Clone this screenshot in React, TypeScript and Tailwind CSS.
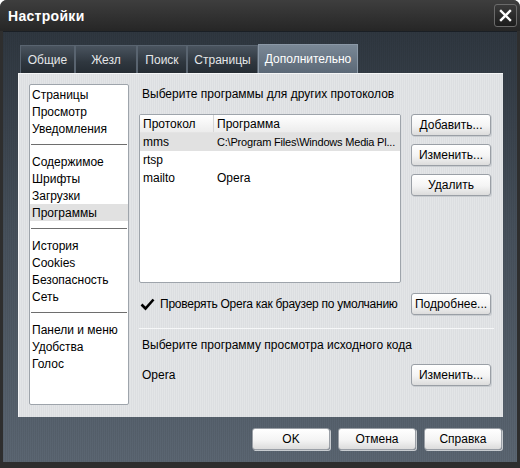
import React from 'react'

const FONT = { fontFamily: '"Liberation Sans", "DejaVu Sans", sans-serif' }

const TABS = ['Общие', 'Жезл', 'Поиск', 'Страницы', 'Дополнительно']
const TAB_W = [55, 62, 50, 71, 100]

const GROUPS: string[][] = [
  ['Страницы', 'Просмотр', 'Уведомления'],
  ['Содержимое', 'Шрифты', 'Загрузки', 'Программы'],
  ['История', 'Cookies', 'Безопасность', 'Сеть'],
  ['Панели и меню', 'Удобства', 'Голос'],
]

const ROWS = [
  { proto: 'mms', prog: 'C:\\Program Files\\Windows Media Pl...', sel: true },
  { proto: 'rtsp', prog: '', sel: false },
  { proto: 'mailto', prog: 'Opera', sel: false },
]

function Btn({ children, w = 'w-[80px]' }: { children: React.ReactNode; w?: string }) {
  return (
    <button
      className={`${w} h-[22px] rounded-[3px] border border-[#9a9fa6] bg-[linear-gradient(#ffffff,#f4f4f4_55%,#dcdcdc)] text-[12px] text-black shadow-[1px_1px_0_#c8ccd0] flex items-center justify-center shrink-0`}
    >
      {children}
    </button>
  )
}

export default function App() {
  return (
    <div style={FONT} className="w-[520px] h-[468px] flex flex-col bg-[#2e2e2e] rounded-t-[7px] px-[3px] pb-[6px]">
      <div className="h-[31px] flex items-center justify-between bg-[linear-gradient(#3e3e3e,#262626)] rounded-t-[7px] -mx-[3px] pl-[8px] pr-[3px]">
        <span className="text-white font-bold text-[14px] tracking-[0.3px] mt-[2px]">Настройки</span>
        <div className="w-[23px] h-[23px] rounded-[3px] border border-[#6a6a6a] bg-[linear-gradient(#3a3a3a,#1c1c1c)] flex items-center justify-center">
          <svg width="13" height="13" viewBox="0 0 13 13">
            <path d="M2 2 L11 11 M11 2 L2 11" stroke="#fff" strokeWidth="2.4" strokeLinecap="square" />
          </svg>
        </div>
      </div>

      <div className="flex-1 flex flex-col pt-[13px] pl-[15px] pr-[14px] border-t border-[#1a1f25] bg-[image:repeating-linear-gradient(90deg,rgba(0,0,0,0.06)_0px,rgba(0,0,0,0.06)_1px,transparent_1px,transparent_2px),linear-gradient(#2f3740,#46505b_45%,#5b6672)]">
        <div className="flex items-end ml-[2px] h-[28px]">
          {TABS.map((t, i) => {
            const active = i === TABS.length - 1
            return (
              <div
                key={t}
                style={{ width: TAB_W[i] }}
                className={`flex items-center justify-center text-[12px] border border-b-0 ${
                  active
                    ? 'h-[29px] text-white border-[#8b98a6] bg-[linear-gradient(#7a8896,#5b6876)]'
                    : 'h-[28px] text-[#e4e6e8] border-[#596470] bg-[linear-gradient(#4a545f,#2f373f_60%,#252c33)]'
                }`}
              >
                {t}
              </div>
            )
          })}
        </div>

        <div className="h-[344px] flex pl-[10px] pt-[10px] border-l border-t border-[#f4f5f6] bg-[repeating-linear-gradient(90deg,#dcdee1_0px,#dcdee1_1px,#e3e5e7_1px,#e3e5e7_2px)]">
          <div className="w-[100px] h-[321px] bg-white border border-[#9ea4ab] rounded-[2px] flex flex-col pt-[1px] text-[12px] text-black shrink-0">
            {GROUPS.map((g, gi) => (
              <div key={gi} className="flex flex-col">
                {gi > 0 && <div className="h-[1px] bg-[#6e6e6e] mx-[1px] mt-[7px] mb-[8px]" />}
                {g.map(item => (
                  <div
                    key={item}
                    className={`h-[17px] flex items-center pl-[2px] ${item === 'Программы' ? 'bg-[#e1e1e1]' : ''}`}
                  >
                    {item}
                  </div>
                ))}
              </div>
            ))}
          </div>

          <div className="ml-[10px] flex flex-col text-[12px] text-black w-[352px]">
            <div className="h-[20px] flex items-center pl-[3px]">Выберите программы для других протоколов</div>
            <div className="flex mt-[10px]">
              <div className="w-[262px] h-[169px] bg-white border border-[#9ea4ab] rounded-[2px] flex flex-col shrink-0 overflow-hidden">
                <div className="h-[18px] flex items-center bg-[linear-gradient(#ffffff,#ececec)] border-b border-[#e4e4e4]">
                  <div className="w-[74px] shrink-0 pl-[3px] border-r border-[#d6d6d6] h-full flex items-center">Протокол</div>
                  <div className="pl-[3px]">Программа</div>
                </div>
                {ROWS.map(r => (
                  <div key={r.proto} className={`h-[18px] flex items-center overflow-hidden ${r.sel ? 'bg-[#e1e1e1]' : ''}`}>
                    <div className="w-[74px] shrink-0 pl-[3px]">{r.proto}</div>
                    <div className={`pl-[3px] whitespace-nowrap ${r.prog.length > 20 ? 'text-[11px] tracking-[-0.2px]' : ''}`}>{r.prog}</div>
                  </div>
                ))}
              </div>
              <div className="ml-[10px] flex flex-col gap-[8px]">
                <Btn>Добавить...</Btn>
                <Btn>Изменить...</Btn>
                <Btn>Удалить</Btn>
              </div>
            </div>

            <div className="flex items-center mt-[10px] h-[22px]">
              <div className="w-[262px] shrink-0 flex items-center pl-[1px]">
                <svg width="15" height="15" viewBox="0 0 15 15" className="shrink-0">
                  <path d="M1.5 7.5 L5.5 11.5 L13.5 2.5" stroke="#000" strokeWidth="2.6" fill="none" />
                </svg>
                <span className="ml-[5px] whitespace-nowrap tracking-[-0.25px]">Проверять Opera как браузер по умолчанию</span>
              </div>
              <div className="ml-[10px]">
                <Btn>Подробнее...</Btn>
              </div>
            </div>

            <div className="h-[1px] bg-[#f6f7f8] mt-[13px] w-[355px]" />

            <div className="h-[20px] flex items-center pl-[3px] mt-[6px]">Выберите программу просмотра исходного кода</div>
            <div className="flex items-center mt-[9px] h-[22px]">
              <div className="w-[262px] shrink-0 pl-[3px]">Opera</div>
              <div className="ml-[10px]">
                <Btn>Изменить...</Btn>
              </div>
            </div>
          </div>
        </div>

        <div className="flex justify-end gap-[8px] mt-[11px] pr-[1px]">
          <Btn w="w-[78px]">OK</Btn>
          <Btn w="w-[78px]">Отмена</Btn>
          <Btn w="w-[78px]">Справка</Btn>
        </div>
      </div>
    </div>
  )
}
